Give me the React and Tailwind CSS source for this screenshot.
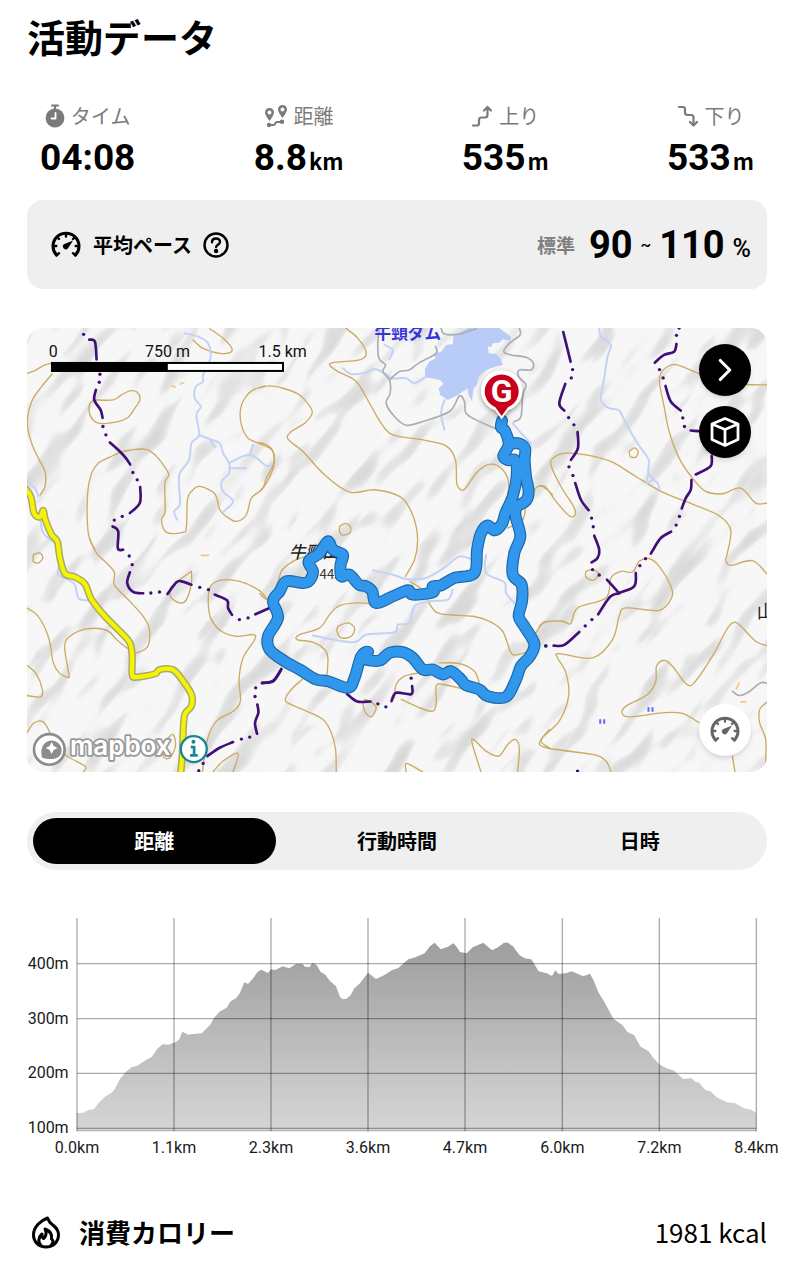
import { useState } from "react";
import { ChevronRight } from "lucide-react";

const JP = "font-['Noto_Sans_CJK_JP',sans-serif]";
const ROBOTO = "font-['Roboto',sans-serif]";

const tabs = ["距離", "行動時間", "日時"];

const stats = [
  { label: "タイム", value: "04:08", icon: StopwatchIcon },
  { label: "距離", value: "8.8", unit: "km", icon: RouteIcon },
  { label: "上り", value: "535", unit: "m", icon: AscentIcon },
  { label: "下り", value: "533", unit: "m", icon: DescentIcon },
];

export default function App() {
  return (
    <main className={`min-h-screen bg-white px-[27px] pt-3 pb-6 text-black ${JP}`}>
      <h1 className="text-[38px] leading-12 font-bold">活動データ</h1>

      <dl className="mt-[42px] flex justify-between px-[13px]">
        {stats.map((stat) => (
          <Stat key={stat.label} {...stat} />
        ))}
      </dl>

      <section className="mt-5 flex min-h-[89px] items-center rounded-2xl bg-[#efefef] pr-4 pl-6">
        <GaugeIcon className="size-[30px]" />
        <h2 className="ml-3 text-[20px] leading-7 font-bold">平均ペース</h2>
        <button type="button" aria-label="平均ペースについて" className="ml-2.5">
          <HelpIcon />
        </button>
        <p className="ml-auto flex items-center">
          <span className="mr-3.5 text-[19px] leading-7 font-bold text-[#808080]">標準</span>
          <span className={`text-[38px] leading-11 font-bold ${ROBOTO}`}>90</span>
          <span className={`mx-2 text-[16px] leading-6 font-medium ${ROBOTO}`}>~</span>
          <span className={`text-[38px] leading-11 font-bold ${ROBOTO}`}>110</span>
          <span className={`ml-2 self-end text-[25px] leading-9 font-medium ${ROBOTO}`}>%</span>
        </p>
      </section>

      <section className="relative mt-[39px] overflow-hidden rounded-2xl" aria-label="地図">
        <TrailMap />
        <div className="absolute top-4 right-4 flex flex-col gap-2.5">
          <button type="button" aria-label="次へ" className="grid size-[52px] place-items-center rounded-full bg-black text-white shadow-md">
            <ChevronRight size={38} strokeWidth={2} />
          </button>
          <button type="button" aria-label="3D" className="grid size-[52px] place-items-center rounded-full bg-black text-white shadow-md">
            <CubeIcon />
          </button>
        </div>
        <button type="button" aria-label="ペース表示" className="absolute right-4 bottom-4 grid size-[52px] place-items-center rounded-full bg-white text-[#666] shadow-md">
          <GaugeIcon className="size-[30px]" />
        </button>
      </section>

      <AxisTabs />
      <ElevationChart />

      <section className="mt-[52px] flex items-center">
        <FlameIcon />
        <h2 className="ml-[14px] text-[26px] leading-10 font-bold">消費カロリー</h2>
        <p className="ml-auto text-[26px] leading-10">1981 kcal</p>
      </section>
    </main>
  );
}

function Stat({ label, value, unit, icon: Icon }) {
  return (
    <div className="flex flex-col items-center">
      <dt className="flex h-7 items-center gap-1.5 text-[20px] text-[#7a7a7a]">
        <Icon />
        {label}
      </dt>
      <dd className="mt-1.5 flex items-baseline">
        <span className={`text-[37px] leading-11 font-bold ${ROBOTO}`}>{value}</span>
        {unit && <span className="ml-0.5 text-[22px] leading-8 font-bold">{unit}</span>}
      </dd>
    </div>
  );
}

function AxisTabs() {
  const [active, setActive] = useState(tabs[0]);
  return (
    <div role="tablist" className="mt-10 flex rounded-full bg-[#efefef] p-1.5">
      {tabs.map((tab) => (
        <button
          key={tab}
          type="button"
          role="tab"
          aria-selected={tab === active}
          onClick={() => setActive(tab)}
          className={`h-[46px] flex-1 rounded-full text-[20px] font-bold ${tab === active ? "bg-black text-white" : ""}`}
        >
          {tab}
        </button>
      ))}
    </div>
  );
}

const profile =
  "170,640 190,638 205,630 222,628 235,610 255,590 272,580 283,570 300,536 318,515 335,502 350,498 378,480 396,470 412,446 428,433 445,434 468,426 478,418 487,395 505,404 520,402 545,400 570,375 582,354 600,334 620,323 632,304 648,295 660,278 673,247 684,252 700,234 712,217 723,209 744,219 753,208 766,210 788,199 808,205 828,192 848,192 855,200 868,202 877,189 890,195 902,216 916,224 930,243 948,259 960,291 968,298 980,296 992,285 1003,265 1020,250 1044,218 1068,237 1095,224 1115,211 1135,204 1148,192 1165,178 1186,172 1214,160 1230,139 1244,128 1262,148 1284,140 1300,130 1308,138 1320,156 1340,160 1358,142 1390,128 1416,151 1434,142 1452,128 1464,128 1480,140 1498,165 1514,175 1534,178 1556,214 1580,220 1596,228 1606,211 1616,222 1640,219 1655,214 1690,229 1710,221 1720,240 1736,278 1752,304 1780,356 1808,376 1822,396 1842,405 1862,440 1885,453 1900,473 1918,493 1940,505 1960,511 1990,537 2014,535 2028,547 2036,547 2056,570 2070,573 2090,592 2120,607 2144,609 2172,625 2194,629 2209,639";

const distances = ["0.0km", "1.1km", "2.3km", "3.6km", "4.7km", "6.0km", "7.2km", "8.4km"];
const gridX = [171, 462, 753, 1044, 1335, 1627, 1918, 2209];
const altitudes = [["400m", 191], ["300m", 356], ["200m", 520], ["100m", 685]];

function ElevationChart() {
  return (
    <svg viewBox="-60 54 2382 726" className="-mx-[27px] mt-12 block w-[calc(100%+54px)] max-w-none" role="img" aria-label="標高グラフ">
      <defs>
        <linearGradient id="elevation" gradientUnits="userSpaceOnUse" x1="0" y1="128" x2="0" y2="694">
          <stop offset="0" stopColor="#9e9e9e" />
          <stop offset="1" stopColor="#d6d6d6" />
        </linearGradient>
      </defs>
      <path d={`M170,694 L${profile} L2209,694Z`} fill="url(#elevation)" />
      <g stroke="#000" strokeOpacity=".33" strokeWidth="4">
        {gridX.map((x) => (
          <path key={x} d={`M${x},54V694`} />
        ))}
        {altitudes.map(([label, y]) => (
          <path key={label} d={`M171,${y}H2209`} />
        ))}
        <path d="M171,692H2209" strokeOpacity=".15" />
      </g>
      <g fill="#1a1a1a" fontSize="48" className={ROBOTO}>
        {altitudes.map(([label, y]) => (
          <text key={label} x="146" y={y + 15} textAnchor="end">{label}</text>
        ))}
        {distances.map((label, i) => (
          <text key={label} x={gridX[i]} y="758" textAnchor="middle">{label}</text>
        ))}
      </g>
    </svg>
  );
}

// Catmull-Rom through "x,y x,y ..." points
function smooth(points) {
  const p = points.split(" ").map((pair) => pair.split(",").map(Number));
  let d = `M${p[0]}`;
  for (let i = 0; i < p.length - 1; i++) {
    const a = p[i - 1] || p[i];
    const b = p[i];
    const c = p[i + 1];
    const e = p[i + 2] || c;
    d += `C${b[0] + (c[0] - a[0]) / 6},${b[1] + (c[1] - a[1]) / 6} ${c[0] - (e[0] - b[0]) / 6},${c[1] - (e[1] - b[1]) / 6} ${c}`;
  }
  return d;
}

// The map is drawn in six sectors, each with its own origin.
const sectors = [
  {
    origin: [0, 0],
    contours: [
      "21,160 45,152 70,137 94,130",
      "97,162 65,200 35,245 22,310 35,370 55,415 75,455 75,500 60,526",
      "225,240 210,250 210,285 235,310 290,306 325,292 345,265 360,240 352,217 330,213 305,225 280,240 225,240",
      "225,690 205,640 203,520 215,460 235,430 270,412 310,395 375,388 405,405 430,435 447,465 435,490 436,575 425,600 440,638 490,638 500,620 503,540 515,515 540,500 585,522 600,570 620,590 650,605 680,585 695,535 728,508 740,475 762,430 758,392 730,375 685,355 665,315 662,270 675,235 700,210 735,198",
      "520,60 550,85 600,100 630,98 636,85 610,55 570,26",
    ],
    rivers: ["495,40 535,50 565,70 572,115 550,165 550,185 528,200 525,235 543,260 530,285 538,345 515,370 508,420 480,460 478,500 480,555 463,575 472,600", "538,345 570,358 600,370 610,400 628,430 628,460 606,485 610,515 640,545 612,575", "628,430 690,405 740,438 755,433", "628,445 680,445", "690,405 700,375", "570,358 585,382", "21,485 45,505 55,530", "60,590 70,640 105,670"],
    borders: ["208,59 225,65 230,118", "228,210 223,240 242,270 248,294", "270,368 300,395 318,415 331,434", "361,502 360,550 330,580", "278,620 295,635 294,686 310,690"],
    dots: "191,43 240,163 238,187 249,320 258,345 339,458 352,480 307,590 283,601",
  },
  {
    origin: [0, 660],
    contours: [
      "208,-5 230,40 282,95 283,135 330,185 370,230 388,265 388,310 375,330 343,342",
      "40,45 60,40 68,55 55,70 40,65 40,45",
      "21,205 50,225 75,265 90,310 100,370 118,400 146,414 145,395 134,320 150,290 200,268 260,272 290,300 322,327",
      "21,377 50,405 67,450 62,472 21,468",
      "21,580 40,552 65,545 80,560 90,582",
      "515,95 480,120 452,145 455,175 482,190 500,180 515,130 515,95",
      "745,180 715,150 660,125 600,122 570,145 566,200 575,240 605,275 650,290 700,285 705,300 670,355 658,420 662,485 640,515 590,545 563,600 548,697",
      "580,697 610,665 655,642 640,697",
      "120,600 135,645 195,680 190,697",
      "440,600 460,585 467,620 450,655 430,650 440,600",
    ],
    rivers: ["115,85 115,105 145,120 165,135 175,175 200,182 215,180"],
    borders: ["330,98 322,130 340,157 370,161", "443,163 470,128 485,125 515,135", "585,165 622,182 625,205 637,226", "707,224 748,206", "785,388 762,424 727,431", "713,495 716,520 706,550 712,583", "640,608 600,625 563,650"],
    dots: "328,49 337,75 393,160 419,157 540,143 566,150 659,240 685,235 708,445 706,471 665,599 690,593 550,672 537,694",
  },
  {
    origin: [720, 0],
    contours: [
      "258,24 295,55 320,98 300,120 220,128 212,138 235,155 290,185 330,250 365,310 400,345 490,360 560,378 588,420 592,490 605,510 620,503 655,455 695,433 730,450 748,490 740,560",
      "0,204 30,198 70,205 115,222 140,245 158,278 135,310 95,335 85,358 130,395 195,465 270,517 345,510 420,530 450,565 470,620 474,670 465,720 438,770",
      "0,515 20,490 42,440 42,400 25,377 0,368",
      "240,620 258,611 273,622 270,640 250,646 240,636 240,620",
      "745,625 790,600 803,545 830,505 850,500 880,525",
    ],
    rivers: ["250,145 275,162 320,158 345,147 375,160 400,175 440,175 465,190 500,170", "555,240 545,280 555,330", "760,310 790,345 815,370", "375,75 400,90 390,118"],
    roads: ["360,24 355,65 358,115 378,135 370,155 390,180 392,220 380,250 405,290 440,316 490,305 570,275 600,228 615,245 620,280 650,300 710,327", "390,180 420,155 450,150 480,128 530,100 528,80", "545,24 555,42 600,42 650,26", "780,24 782,45 750,70 733,95 755,105 800,112 822,130 815,150 780,150 778,170 800,195 790,225 785,290 765,305"],
    borders: [],
    dots: "",
  },
  {
    origin: [720, 630],
    contours: [
      "0,192 20,210", "52,180 65,125 100,95 140,80",
      "345,225 300,220 240,228 210,255 180,295 120,315 112,330 160,338 195,360 205,385 202,440",
      "235,290 265,280 285,295 275,320 245,325 232,305 235,290",
      "450,155 490,182 515,230 545,253 640,260 690,275 730,305 755,370 775,375 800,368",
      "130,448 95,480 78,515 130,540 190,570 215,610 228,660 230,728",
      "310,520 315,545 335,562 350,535 335,518 315,510",
      "540,400 600,402 645,425 660,462", "405,505 410,465 435,440 480,430", "425,510 510,545 530,525 530,470 550,465 610,478",
      "665,728 638,640 645,632 680,665 718,680 745,645 767,630 780,655 775,728",
      "440,728 438,705 450,705 490,728", "870,600 845,635 870,655", "830,310 850,280 870,275",
    ],
    rivers: ["340,122 400,135 440,148 500,145 560,110 600,80 640,90", "680,75 680,130 735,158 740,190 765,220", "160,318 280,338 320,315 405,308 415,285 450,280 465,230 510,215 565,210 580,180"],
    borders: ["65,420 40,454 7,460", "262,493 293,516 333,516", "396,515 410,490 455,494 458,470"],
    dots: "355,523 379,532 455,446 860,349",
  },
  {
    origin: [1560, 0],
    contours: [
      "0,498 20,503 50,545 90,588 108,585 103,560 65,500 35,435 45,412 80,400 140,405 215,425 290,470 370,517 460,553 540,588 575,630 565,700 560,720 575,737 640,723 684,763",
      "684,195 580,190 478,160 410,134 372,150 361,185 375,260 390,335 420,415 460,475 500,515 550,522 605,505 650,550 684,550",
      "270,395 285,384 297,395 290,412 273,410 270,395",
    ],
    rivers: ["180,24 185,50 215,75 205,110 195,175 185,240 210,265 240,272 260,310 295,370 320,405 330,425 328,460 355,490 360,508", "328,460 322,490 340,480"],
    borders: ["72,36 94,125", "78,192 60,250 75,272", "115,337 116,385 95,420", "108,490 125,540 148,571", "165,648 180,690 175,715 157,728", "412,72 405,95 375,105 347,128", "379,198 395,245 425,272", "455,332 478,334", "518,408 514,440 470,464", "457,481 455,510 440,535 428,566", "396,636 365,655 342,690 335,702"],
    dots: "100,149 96,174 88,293 104,315 89,441 101,467 157,595 162,621 420,24 412,46 361,149 372,174 431,294 436,320 421,590 411,616",
  },
  {
    origin: [1560, 660],
    contours: [
      "0,260 20,247 70,245 95,252 115,205 200,175 215,115 245,95 280,97 300,65 330,57 360,80 395,140 397,175 360,212 260,205 240,230 220,300 160,355 60,342 55,355 80,400 88,470 60,545 5,600 20,625 160,645 200,665 215,697",
      "140,95 160,90 178,103 162,122 140,112 140,95",
      "684,318 650,305 600,255 580,250 560,275 520,350 465,430 440,432 400,380 375,362 352,380 350,425 325,465 265,497 248,518 270,532 370,520 430,522 480,550",
      "684,488 662,510 662,550 680,600 680,670", "580,650 588,697",
    ],
    rivers: [],
    roads: ["580,455 600,468 625,460 665,430 684,432"],
    borders: ["203,120 240,161", "290,100 285,140 240,160 212,172 177,224", "120,277 75,316 43,318"],
    dots: "19,319 138,259 158,240 160,90 180,106 302,78 319,57 115,695",
  },
];

const route = smooth(
  "728,302 725,322 738,335 748,375 732,408 746,421 768,422 772,470 760,530 738,580 728,612 705,632 685,617 665,640 653,690 645,760 585,775 545,797 520,800 520,818 460,825 445,812 400,830 350,850 338,815 320,800 298,795 270,765 245,770 243,735 250,705 220,690 205,665 180,700 147,725 160,755 150,782 130,790 80,785 60,815 40,845 55,895 25,950 30,990 75,1025 120,1050 170,1080 205,1085 265,1105 285,1075 305,1010 325,997 318,1018 360,1023 390,1000 430,998 460,1015 490,1050 520,1050 550,1065 575,1055 605,1080 620,1097 660,1110 685,1130 740,1132 770,1080 785,1040 812,1010 825,972 795,920 778,890 788,845 787,795 760,765 765,700 783,650 769,590 772,562 800,543 808,515 800,470 796,420 797,385 777,370 755,372"
);

function TrailMap() {
  return (
    <svg viewBox="21 24 2223 1335" className="block w-full" role="img" aria-label="活動ルート">
      <defs>
        <filter id="relief" x="0" y="0" width="100%" height="100%" colorInterpolationFilters="sRGB">
          <feTurbulence type="fractalNoise" baseFrequency=".005 .01" numOctaves="2" seed="8" />
          <feDiffuseLighting surfaceScale="60" diffuseConstant="1.1" lightingColor="#fff">
            <feDistantLight azimuth="270" elevation="60" />
          </feDiffuseLighting>
          <feComponentTransfer>
            <feFuncR type="table" tableValues=".84 .86 .88 .91 .962 .97" />
            <feFuncG type="table" tableValues=".84 .86 .88 .91 .962 .97" />
            <feFuncB type="table" tableValues=".84 .86 .88 .91 .962 .97" />
          </feComponentTransfer>
        </filter>
        <filter id="pin-shadow" x="-30%" y="-30%" width="160%" height="160%">
          <feDropShadow dx="0" dy="6" stdDeviation="8" floodOpacity=".4" />
        </filter>
      </defs>
      <rect x="21" y="24" width="2223" height="1335" fill="#f6f6f6" />
      <rect x="-700" y="-900" width="3700" height="3200" transform="rotate(-52 1130 690)" filter="url(#relief)" />

      <path
        fill="#b9cbf7"
        d="M1302,48 1345,24 1440,24 1455,35 1475,50 1472,62 1450,58 1440,68 1420,70 1415,82 1405,78 1408,100 1430,102 1445,118 1450,135 1430,140 1400,150 1378,168 1372,195 1362,205 1358,245 1348,225 1345,205 1315,225 1285,240 1262,225 1258,205 1272,192 1262,180 1218,172 1216,148 1230,125 1250,115 1240,103 1265,95 1280,75 1300,72Z"
      />

      <g fill="none" strokeLinecap="round" strokeLinejoin="round">
        {sectors.map(({ origin, contours, rivers, roads = [] }) => (
          <g key={origin} transform={`translate(${origin})`}>
            {contours.map((line) => <path key={line} d={smooth(line)} stroke="#cbaa62" strokeWidth="4" />)}
            {rivers.map((line) => <path key={line} d={smooth(line)} stroke="#c3d2f5" strokeWidth="6" />)}
            {roads.map((line) => <path key={line} d={smooth(line)} stroke="#acacb4" strokeWidth="5" />)}
          </g>
        ))}
        {sectors.map(({ origin, borders, dots }) => (
          <g key={origin} transform={`translate(${origin})`}>
            {borders.map((line) => <path key={line} d={smooth(line)} stroke="#401078" strokeWidth="8" />)}
            {dots && dots.split(" ").map((dot) => <path key={dot} d={`M${dot}h.1`} stroke="#401078" strokeWidth="10" />)}
          </g>
        ))}
        <path d="M455,197l12,4M482,192l10,-4M545,707h22M2160,1090l-8,18M2165,1147h15" stroke="#f0c888" strokeWidth="5" />
        <Highway stroke="#aaa96c" strokeWidth="22" />
        <Highway stroke="#f4f400" strokeWidth="13" />
      </g>

      <g className={JP}>
        <text x="1065" y="56" fontSize="50" fontWeight="700" fill="#3434d8">牛頸ダム</text>
        <text x="808" y="714" fontSize="50" fontWeight="500" fontStyle="italic" fill="#222">牛頸山</text>
        <text x="900" y="778" fontSize="40" fill="#333">443</text>
        <text x="2213" y="895" fontSize="54" fill="#222">山</text>
      </g>
      <path d="M1743,1199v14M1755,1199v14M1888,1163v14M1900,1163v14" stroke="#6464ff" strokeWidth="6" />

      <g transform="translate(720)" fill="none" strokeLinecap="round" strokeLinejoin="round">
        <path d={route} stroke="#1b67aa" strokeWidth="36" />
        <path d={route} stroke="#3097ec" strokeWidth="29" />
      </g>

      <g filter="url(#pin-shadow)">
        <path d="M1447,298 1428,271a62,62 0 1 1 38,0Z" fill="#fff" />
        <path d="M1447,288 1428,262a51,51 0 1 1 38,0Z" fill="#c9001a" />
      </g>
      <text x="1447" y="245" textAnchor="middle" fontSize="96" fontWeight="700" fill="#fff" className={ROBOTO}>G</text>

      <g fontSize="48" fill="#111" className={ROBOTO}>
        <text x="100" y="111" textAnchor="middle">0</text>
        <text x="443" y="111" textAnchor="middle">750 m</text>
        <text x="789" y="111" textAnchor="middle">1.5 km</text>
      </g>
      <rect x="96" y="129" width="694" height="24" fill="#fff" stroke="#000" strokeWidth="6" />
      <path d="M94,126h350v30H94z" />

      <g transform="translate(0 660)">
        <circle cx="88" cy="630" r="46" fill="#fff" stroke="#8c8c8c" strokeWidth="8" />
        <path d="M66,654c-4,-18 -2,-32 8,-42 12,-12 30,-12 42,0 12,12 12,30 0,40 -12,10 -32,8 -50,2z" fill="#8c8c8c" />
        <path d="M95,608l6,12 12,6 -12,6 -6,12 -6,-12 -12,-6 12,-6z" fill="#fff" />
        <text x="150" y="648" fontSize="78" fontWeight="600" fill="#fff" stroke="#999" strokeWidth="11" strokeLinejoin="round" paintOrder="stroke" className="font-['Inter',sans-serif]">
          mapbox
        </text>
        <circle cx="522" cy="629" r="39" fill="#fff" stroke="#198495" strokeWidth="7" />
        <path d="M513,623h10v24M511,648h23" fill="none" stroke="#198495" strokeWidth="8" />
        <circle cx="521" cy="607" r="6" fill="#198495" />
      </g>
    </svg>
  );
}

function Highway(props) {
  return (
    <path
      d={smooth("10,500 32,530 42,580 60,592 70,572 76,600 95,645 112,665 120,715 135,762 165,772 195,793 215,840 255,890 300,935 330,970 337,1010 337,1065 350,1073 405,1063 420,1050 460,1051 490,1085 515,1125 515,1160 495,1185 490,1240 488,1300 482,1370")}
      {...props}
    />
  );
}

function StopwatchIcon() {
  return (
    <svg viewBox="0 0 20 24" className="h-6 w-5" aria-hidden="true">
      <circle cx="10" cy="14" r="9.4" fill="currentColor" />
      <path d="M7 1.500h6M10 2v4" stroke="currentColor" strokeWidth="2.200" strokeLinecap="round" />
      <path d="M10.500 9v5.500H6.500" fill="none" stroke="#fff" strokeWidth="1.800" strokeLinecap="round" strokeLinejoin="round" />
    </svg>
  );
}

function RouteIcon() {
  return (
    <svg viewBox="0 0 24 24" className="size-6" aria-hidden="true">
      <path fill="currentColor" fillRule="evenodd" d="M5.500 4C2.800 4 1 6 1 8.300 1 11.500 5.500 17 5.500 17S10 11.500 10 8.300C10 6 8.200 4 5.500 4Zm0 2.400a2 2 0 1 1 0 4 2 2 0 0 1 0-4ZM18.500 1C15.800 1 14 3 14 5.300c0 3.200 4.500 8.700 4.500 8.700S23 8.500 23 5.300C23 3 21.200 1 18.500 1Zm0 2.400a2 2 0 1 1 0 4 2 2 0 0 1 0-4Z" />
      <path d="M5 21h4.500c2 0 1.500-3 3.500-3h5" fill="none" stroke="currentColor" strokeWidth="2.200" />
      <circle cx="5" cy="21" r="2.200" fill="currentColor" />
      <circle cx="18" cy="17.800" r="2.200" fill="currentColor" />
    </svg>
  );
}

function AscentIcon() {
  return (
    <svg viewBox="0 0 22 22" className="size-[22px]" fill="none" stroke="currentColor" strokeWidth="2.200" strokeLinecap="round" strokeLinejoin="round" aria-hidden="true">
      <path d="M2 20.500h4q2 0 2-2V15q0-2.500 2.500-2.500H14q2.500 0 2.500-2.500V3M13 5.500 16.500 2 20 5.500" />
    </svg>
  );
}

function DescentIcon() {
  return (
    <svg viewBox="0 0 22 22" className="size-[22px]" fill="none" stroke="currentColor" strokeWidth="2.200" strokeLinecap="round" strokeLinejoin="round" aria-hidden="true">
      <path d="M2 2h4q2 0 2 2v3.500Q8 10 10.500 10H14q2.500 0 2.500 2.500v7M13 17l3.500 3.500L20 17" />
    </svg>
  );
}

function GaugeIcon({ className }) {
  return (
    <svg viewBox="0 0 30 30" className={className} fill="none" stroke="currentColor" strokeLinecap="round" aria-hidden="true">
      <path d="M5.500 25A13 13 0 1 1 24.500 25" strokeWidth="3" />
      <path d="M5.500 25.500l2.500-2.300M24.500 25.500l-2.500-2.300M2.500 16h2.800M27.500 16h-2.800M15 3.500v3M6 7l2 2M24 7l-2 2" strokeWidth="2.400" />
      <path d="M22 10.500 12.800 14.300a2.800 2.800 0 1 0 4.100 4.100Z" fill="currentColor" stroke="none" />
    </svg>
  );
}

function HelpIcon() {
  return (
    <svg viewBox="0 0 28 28" className="size-7" fill="none" stroke="currentColor" strokeWidth="2.400" strokeLinecap="round" strokeLinejoin="round" aria-hidden="true">
      <circle cx="14" cy="14" r="11.500" />
      <path d="M10 11.200c0-5 8-4.800 8-.4 0 2.800-3.900 2.900-3.900 5.300" />
      <circle cx="14.100" cy="20" r="1" fill="currentColor" />
    </svg>
  );
}

function CubeIcon() {
  return (
    <svg viewBox="0 0 32 32" className="size-8" fill="none" stroke="currentColor" strokeWidth="2.800" strokeLinejoin="round" aria-hidden="true">
      <path d="M16 2.500 29 8v15.500L16 29.500 3 23.500V8ZM3 8l13 5.500L29 8M16 13.500v16" />
    </svg>
  );
}

function FlameIcon() {
  return (
    <svg viewBox="0 0 38 38" className="size-[38px]" fill="none" stroke="currentColor" strokeWidth="3" strokeLinejoin="round" strokeLinecap="round" aria-hidden="true">
      <path d="M20.500 5C14 7.500 6.500 13.500 6.500 21.800 6.500 29 12 34 19 34s12.500-5 12.500-12.200c0-4.300-2.300-7-5-9.300-2.500-2-4.500-3-6-7.500Z" />
      <path d="M14 32.500c-3.500-3.500-2.500-8.500 1-11.500 0 2.500.3 4 1.800 4.500 2.700-2.800 3-6 1.200-9.500 5 2 7.500 5.500 6.500 10 2.500 1.500 1.500 4.500-.5 6.500" />
    </svg>
  );
}
